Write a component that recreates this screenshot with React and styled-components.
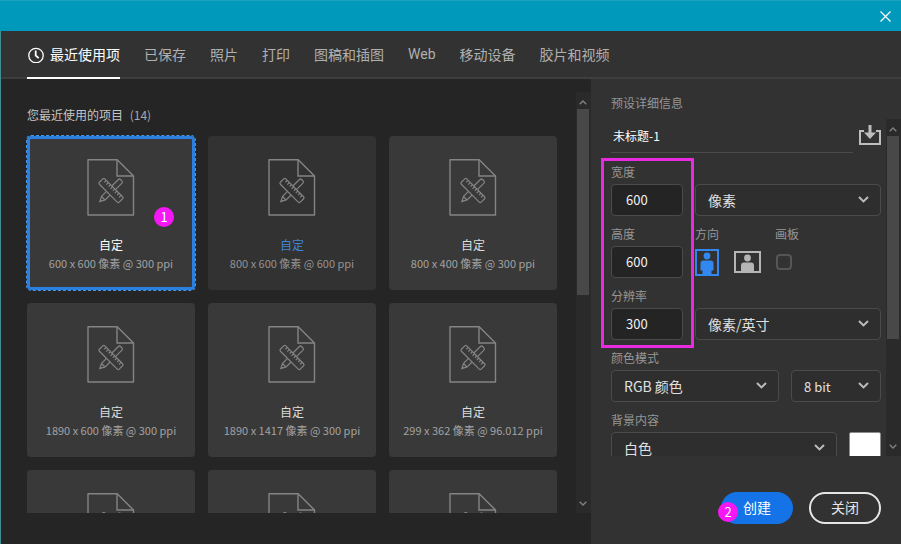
import { useState } from "react";
import styled, { createGlobalStyle } from "styled-components";

const GlobalStyle = createGlobalStyle`
  * {
    box-sizing: border-box;
  }
  body {
    margin: 0;
    background-color: #252525;
  }
  body, button, input, select {
    font-family: "Noto Sans CJK SC", sans-serif;
    font-size: 12px;
  }
`;

const Window = styled.div`
  height: 100vh;
  display: flex;
  flex-direction: column;
  color: #b8b8b8;
  background-color: #252525;
  border-left: 1px solid #3f8f97;
`;

const TitleBar = styled.header`
  flex: none;
  height: 31px;
  margin-left: -1px;
  padding-right: 10px;
  display: flex;
  justify-content: flex-end;
  align-items: center;
  background-color: #0099bc;
  border-top: 1px solid #1fa3c2;
`;

const IconBtn = styled.button`
  all: unset;
  display: flex;
  cursor: pointer;
`;

const Tabs = styled.nav`
  flex: none;
  height: 48px;
  padding: 0 26px;
  display: flex;
  gap: 24px;
  background-color: #323232;
  box-shadow: inset 0 -2px 0 #3e3e3e;
`;

const Tab = styled.button`
  all: unset;
  display: flex;
  align-items: center;
  gap: 6px;
  font-family: Roboto, "Noto Sans CJK SC", sans-serif;
  font-size: 14px;
  white-space: nowrap;
  color: ${(props) => (props.$active ? "#fff" : "#b0b0b0")};
  border-bottom: 2px solid ${(props) => (props.$active ? "#fff" : "transparent")};
  cursor: pointer;
`;

const Body = styled.div`
  flex: 1;
  min-height: 0;
  display: flex;
`;

const Presets = styled.main`
  flex: 1;
  min-width: 0;
  padding: 13px 0 31px;
  display: flex;
`;

const PresetList = styled.section`
  flex: 1;
  overflow: hidden;
  padding: 0 19px 0 26px;
`;

const ListTitle = styled.h2`
  margin: 0;
  height: 44px;
  line-height: 46px;
  font-size: 12px;
  font-weight: 400;
  color: #c4c4c4;
  span {
    margin-left: 4px;
    color: #a8a8a8;
  }
`;

const Grid = styled.div`
  display: grid;
  grid-template-columns: repeat(3, 1fr);
  gap: 13px;
`;

const Card = styled.button`
  all: unset;
  box-sizing: border-box;
  position: relative;
  height: 154px;
  padding-top: 20px;
  display: flex;
  flex-direction: column;
  align-items: center;
  border: 3px solid ${(props) => (props.$selected ? "#2b7fdf" : "transparent")};
  border-radius: 4px;
  background-color: ${(props) => (props.$hover ? "#323232" : "#393939")};
  outline: ${(props) => (props.$selected ? "1px dashed #4a94e6" : "none")};
  text-align: center;
  cursor: pointer;
  h3 {
    margin: 20px 0 0;
    line-height: 18px;
    font-size: 12px;
    font-weight: 400;
    color: ${(props) => (props.$selected ? "#fff" : props.$hover ? "#4084d8" : "#dcdcdc")};
  }
  p {
    margin: 0;
    line-height: 18px;
    font-size: 11px;
    white-space: nowrap;
    color: ${(props) => (props.$hover ? "#939393" : "#a2a2a2")};
  }
`;

const Badge = styled.span`
  position: absolute;
  width: 20px;
  height: 20px;
  border-radius: 50%;
  background-color: #f517f5;
  color: #fff;
  font-size: 13px;
  line-height: 20px;
  text-align: center;
`;

const CardBadge = styled(Badge)`
  right: 18px;
  bottom: 60px;
`;

const ButtonBadge = styled(Badge)`
  left: -5px;
  bottom: 0;
`;

const Scrollbar = styled.div`
  flex: none;
  width: 15px;
  padding: 0 2px 0 1px;
  display: flex;
  flex-direction: column;
  background-color: #2a2a2a;
`;

const Arrow = styled.button`
  all: unset;
  box-sizing: border-box;
  flex: none;
  height: 17px;
  padding: ${(props) => (props.$up ? "3px 0 0" : "0 0 3px")};
  display: flex;
  align-items: center;
  justify-content: center;
`;

const Thumb = styled.div`
  height: ${(props) => props.$size};
  background-color: #484848;
`;

const ThumbTrack = styled.div`
  flex: 1;
`;

const Details = styled.aside`
  flex: none;
  width: 310px;
  display: flex;
  flex-direction: column;
  background-color: #323232;
`;

const DetailsTitle = styled.h2`
  flex: none;
  margin: 0;
  padding: 15px 20px 7px;
  line-height: 18px;
  font-size: 12px;
  font-weight: 400;
  color: #969696;
`;

const DetailsBody = styled.div`
  flex: 1;
  min-height: 0;
  display: flex;
`;

const Form = styled.form`
  flex: 1;
  min-width: 0;
  overflow: hidden;
  padding: 0 5px 0 20px;
  display: flex;
  flex-direction: column;
  gap: 9px;
`;

const NameRow = styled.div`
  flex: none;
  height: 35px;
  display: flex;
  gap: 6px;
  align-items: flex-start;
`;

const NameInput = styled.input`
  flex: 1;
  min-width: 0;
  height: 34px;
  padding: 0 2px;
  color: #fff;
  background: none;
  border: none;
  border-bottom: 1px solid #4b4b4b;
  outline: none;
`;

const SaveBtn = styled(IconBtn)`
  padding-top: 6px;
`;

const Sizes = styled.div`
  position: relative;
  display: flex;
  flex-direction: column;
  gap: 9px;
`;

const Marker = styled.div`
  position: absolute;
  top: -5px;
  bottom: -8px;
  left: -10px;
  width: 93px;
  border: 3px solid #e82ae0;
  pointer-events: none;
`;

const Row = styled.div`
  flex: none;
  display: flex;
  align-items: flex-end;
  gap: 12px;
`;

const Field = styled.div`
  flex: ${(props) => (props.$width ? "none" : "1")};
  width: ${(props) => props.$width || "auto"};
  min-width: 0;
`;

const Label = styled.label`
  display: block;
  margin-bottom: 3px;
  line-height: 18px;
  color: #969696;
`;

const NumberInput = styled.input`
  display: block;
  width: 100%;
  height: 32px;
  padding: 0 14px 2px;
  font-size: 13px;
  color: #f0f0f0;
  background-color: #242424;
  border: 1px solid #4b4b4b;
  border-radius: 4px;
  outline: none;
`;

const SelectWrap = styled.div`
  position: relative;
  svg {
    position: absolute;
    right: 12px;
    top: 12px;
    pointer-events: none;
  }
`;

const Select = styled.select`
  appearance: none;
  display: block;
  width: 100%;
  height: 32px;
  padding: 0 28px 0 12px;
  font-size: ${(props) => props.$size || "14px"};
  color: #e0e0e0;
  background-color: #2e2e2e;
  border: 1px solid #4b4b4b;
  border-radius: 4px;
  outline: none;
`;

const Options = styled.fieldset`
  margin: 0;
  padding: 0;
  border: none;
  width: 68px;
`;

const OptionLine = styled.div`
  height: 32px;
  display: flex;
  align-items: center;
  gap: 15px;
`;

const Legend = styled.legend`
  padding: 0;
  margin-bottom: 3px;
  line-height: 18px;
  color: #969696;
`;

const Orientation = styled.label`
  display: flex;
  color: ${(props) => (props.$checked ? "#3388f0" : "#b5b5b5")};
  cursor: pointer;
  input {
    appearance: none;
    position: absolute;
    margin: 0;
  }
`;

const Checkbox = styled.input`
  appearance: none;
  width: 16px;
  height: 16px;
  margin: 0 1px;
  border: 2px solid #565656;
  border-radius: 4px;
  &:checked {
    background-color: #2680eb;
  }
`;

const Swatch = styled.button`
  all: unset;
  flex: none;
  box-sizing: border-box;
  width: 32px;
  height: 32px;
  background-color: #fff;
  border: 1px solid #8c8c8c;
  border-radius: 2px;
`;

const Footer = styled.footer`
  flex: none;
  height: 88px;
  padding: 0 20px 20px;
  display: flex;
  align-items: flex-end;
  justify-content: flex-end;
  gap: 16px;
`;

const PillButton = styled.button`
  position: relative;
  width: 72px;
  height: 32px;
  padding: 0 0 2px;
  font-size: 14px;
  color: ${(props) => (props.$primary ? "#fff" : "#e6e6e6")};
  background-color: ${(props) => (props.$primary ? "#1473e6" : "transparent")};
  border: 2px solid ${(props) => (props.$primary ? "#1473e6" : "#e6e6e6")};
  border-radius: 16px;
  cursor: pointer;
`;

const CloseIcon = () => (
  <svg width="11" height="11" viewBox="0 0 11 11" stroke="#fff" strokeWidth="1.2">
    <path d="M0.5 0.5l10 10M10.5 0.5l-10 10" />
  </svg>
);

const ClockIcon = () => (
  <svg width="17" height="17" viewBox="0 0 17 17" fill="none" stroke="currentColor">
    <circle cx="9" cy="9.5" r="7.2" strokeWidth="1.3" />
    <path d="M8.7 4.5v5l3 2.6" strokeWidth="1.8" />
  </svg>
);

const Chevron = () => (
  <svg width="11" height="7" viewBox="0 0 11 7" fill="none" stroke="#bcbcbc" strokeWidth="2">
    <path d="M1 1l4.5 4.4L10 1" />
  </svg>
);

const SmallArrow = ({ up }) => (
  <svg width="8" height="5" viewBox="0 0 8 5" fill="none" stroke="#808080" strokeWidth="1.4">
    <path d={up ? "M0.7 4.3L4 1l3.3 3.3" : "M0.7 0.7L4 4l3.3-3.3"} />
  </svg>
);

const DocIcon = () => (
  <svg width="48" height="57" viewBox="0 0 48 57" fill="none" stroke="#848484" strokeWidth="1.4">
    <path d="M1 .8h29.2L46.5 17v39H1z" strokeLinejoin="round" />
    <path d="M30 .8V17h16.5" />
    {/* pencil, behind the ruler */}
    <g transform="translate(24 31.5) rotate(45)" strokeWidth="1.2">
      <path d="M-2.5-3.8v-9.2q0-1.5 1.5-1.5h2q1.5 0 1.5 1.5v9.2" />
      <path d="M-2.5 3.8v7L0 15.8l2.5-5v-7M-2.5 11h5M-.8 14.2h1.6" />
    </g>
    <g transform="translate(24 31.5) rotate(-45)" strokeWidth="1.2">
      <rect x="-3.8" y="-14" width="7.6" height="28" rx="1.4" />
      <path d="M3.8-10.5h-2.6M3.8-7.5H.8M3.8-4.5h-2.6M3.8-1.5H.8M3.8 1.5h-2.6M3.8 4.5H.8M3.8 7.5h-2.6M3.8 10.5H.8" />
    </g>
  </svg>
);

const SaveIcon = () => (
  <svg width="22" height="21" viewBox="0 0 22 21" fill="none" stroke="#bebebe" strokeWidth="2">
    <path d="M5 6H1v13h20V6h-4" />
    <path d="M11 0v9" strokeWidth="3" />
    <path d="M5 7.5h12L11 14z" fill="#bebebe" stroke="none" />
  </svg>
);

const PortraitIcon = () => (
  <svg width="24" height="27" viewBox="0 0 24 27" fill="currentColor">
    <path d="M1 1h22v25H1z" fill="none" stroke="currentColor" strokeWidth="2" />
    <circle cx="12" cy="7" r="3.4" />
    <path d="M5.5 21.5v-7q0-3 3-3h7q3 0 3 3v7h-2V26h-9v-4.5z" />
  </svg>
);

const LandscapeIcon = () => (
  <svg width="27" height="22" viewBox="0 0 27 22" fill="currentColor">
    <path d="M1 1h25v20H1z" fill="none" stroke="currentColor" strokeWidth="2" />
    <circle cx="13.5" cy="7" r="3.4" />
    <path d="M7 21v-6.5q0-3 3-3h7q3 0 3 3V21z" />
  </svg>
);

const Scroll = ({ size }) => (
  <Scrollbar>
    <Arrow $up aria-label="向上滚动">
      <SmallArrow up />
    </Arrow>
    <ThumbTrack>
      <Thumb $size={size} />
    </ThumbTrack>
    <Arrow aria-label="向下滚动">
      <SmallArrow />
    </Arrow>
  </Scrollbar>
);

const Dropdown = ({ id, label, name, width, size, options }) => (
  <Field $width={width}>
    {label && <Label htmlFor={id}>{label}</Label>}
    <SelectWrap>
      <Select id={id} $size={size} aria-label={name}>
        {options.map((option) => (
          <option key={option}>{option}</option>
        ))}
      </Select>
      <Chevron />
    </SelectWrap>
  </Field>
);

const NumberField = ({ id, label, value }) => (
  <Field $width="72px">
    <Label htmlFor={id}>{label}</Label>
    <NumberInput id={id} type="text" inputMode="numeric" defaultValue={value} />
  </Field>
);

const tabs = ["最近使用项", "已保存", "照片", "打印", "图稿和插图", "Web", "移动设备", "胶片和视频"];

const presets = [
  { id: 1, size: "600 x 600 像素 @ 300 ppi", badge: 1 },
  { id: 2, size: "800 x 600 像素 @ 600 ppi", hover: true },
  { id: 3, size: "800 x 400 像素 @ 300 ppi" },
  { id: 4, size: "1890 x 600 像素 @ 300 ppi" },
  { id: 5, size: "1890 x 1417 像素 @ 300 ppi" },
  { id: 6, size: "299 x 362 像素 @ 96.012 ppi" },
  { id: 7 },
  { id: 8 },
  { id: 9 },
];

const App = () => {
  const [tab, setTab] = useState(tabs[0]);
  const [selected, setSelected] = useState(1);
  const [orientation, setOrientation] = useState("portrait");

  return (
    <>
      <GlobalStyle />
      <Window>
        <TitleBar>
          <IconBtn aria-label="关闭窗口">
            <CloseIcon />
          </IconBtn>
        </TitleBar>

        <Tabs>
          {tabs.map((name, i) => (
            <Tab key={name} $active={name === tab} onClick={() => setTab(name)}>
              {i === 0 && <ClockIcon />}
              {name}
            </Tab>
          ))}
        </Tabs>

        <Body>
          <Presets>
            <PresetList>
              <ListTitle>
                您最近使用的项目 <span>(14)</span>
              </ListTitle>
              <Grid>
                {presets.map((preset) => (
                  <Card
                    key={preset.id}
                    $selected={preset.id === selected}
                    $hover={preset.hover}
                    onClick={() => setSelected(preset.id)}
                  >
                    <DocIcon />
                    {preset.size && <h3>自定</h3>}
                    {preset.size && <p>{preset.size}</p>}
                    {preset.badge && <CardBadge>{preset.badge}</CardBadge>}
                  </Card>
                ))}
              </Grid>
            </PresetList>
            <Scroll size="48%" />
          </Presets>

          <Details>
            <DetailsTitle>预设详细信息</DetailsTitle>
            <DetailsBody>
              <Form onSubmit={(e) => e.preventDefault()}>
                <NameRow>
                  <NameInput type="text" aria-label="名称" defaultValue="未标题-1" />
                  <SaveBtn type="button" aria-label="保存预设">
                    <SaveIcon />
                  </SaveBtn>
                </NameRow>

                <Sizes>
                  <Row>
                    <NumberField id="width" label="宽度" value="600" />
                    <Dropdown id="unit" name="单位" options={["像素"]} />
                  </Row>
                  <Row>
                    <NumberField id="height" label="高度" value="600" />
                    <Options>
                      <Legend>方向</Legend>
                      <OptionLine>
                        <Orientation $checked={orientation === "portrait"}>
                          <input
                            type="radio"
                            name="orientation"
                            aria-label="纵向"
                            checked={orientation === "portrait"}
                            onChange={() => setOrientation("portrait")}
                          />
                          <PortraitIcon />
                        </Orientation>
                        <Orientation $checked={orientation === "landscape"}>
                          <input
                            type="radio"
                            name="orientation"
                            aria-label="横向"
                            checked={orientation === "landscape"}
                            onChange={() => setOrientation("landscape")}
                          />
                          <LandscapeIcon />
                        </Orientation>
                      </OptionLine>
                    </Options>
                    <Field>
                      <Label htmlFor="artboard">画板</Label>
                      <OptionLine>
                        <Checkbox id="artboard" type="checkbox" />
                      </OptionLine>
                    </Field>
                  </Row>
                  <Row>
                    <NumberField id="resolution" label="分辨率" value="300" />
                    <Dropdown id="resolution-unit" name="分辨率单位" options={["像素/英寸"]} />
                  </Row>
                  <Marker />
                </Sizes>

                <Row>
                  <Dropdown id="mode" label="颜色模式" options={["RGB 颜色"]} />
                  <Dropdown id="depth" name="位深度" width="90px" size="13px" options={["8 bit"]} />
                </Row>
                <Row>
                  <Dropdown id="background" label="背景内容" options={["白色"]} />
                  <Swatch type="button" aria-label="背景颜色" />
                </Row>
              </Form>
              <Scroll size="67%" />
            </DetailsBody>
            <Footer>
              <PillButton $primary>
                创建
                <ButtonBadge>2</ButtonBadge>
              </PillButton>
              <PillButton>关闭</PillButton>
            </Footer>
          </Details>
        </Body>
      </Window>
    </>
  );
};

export default App;
